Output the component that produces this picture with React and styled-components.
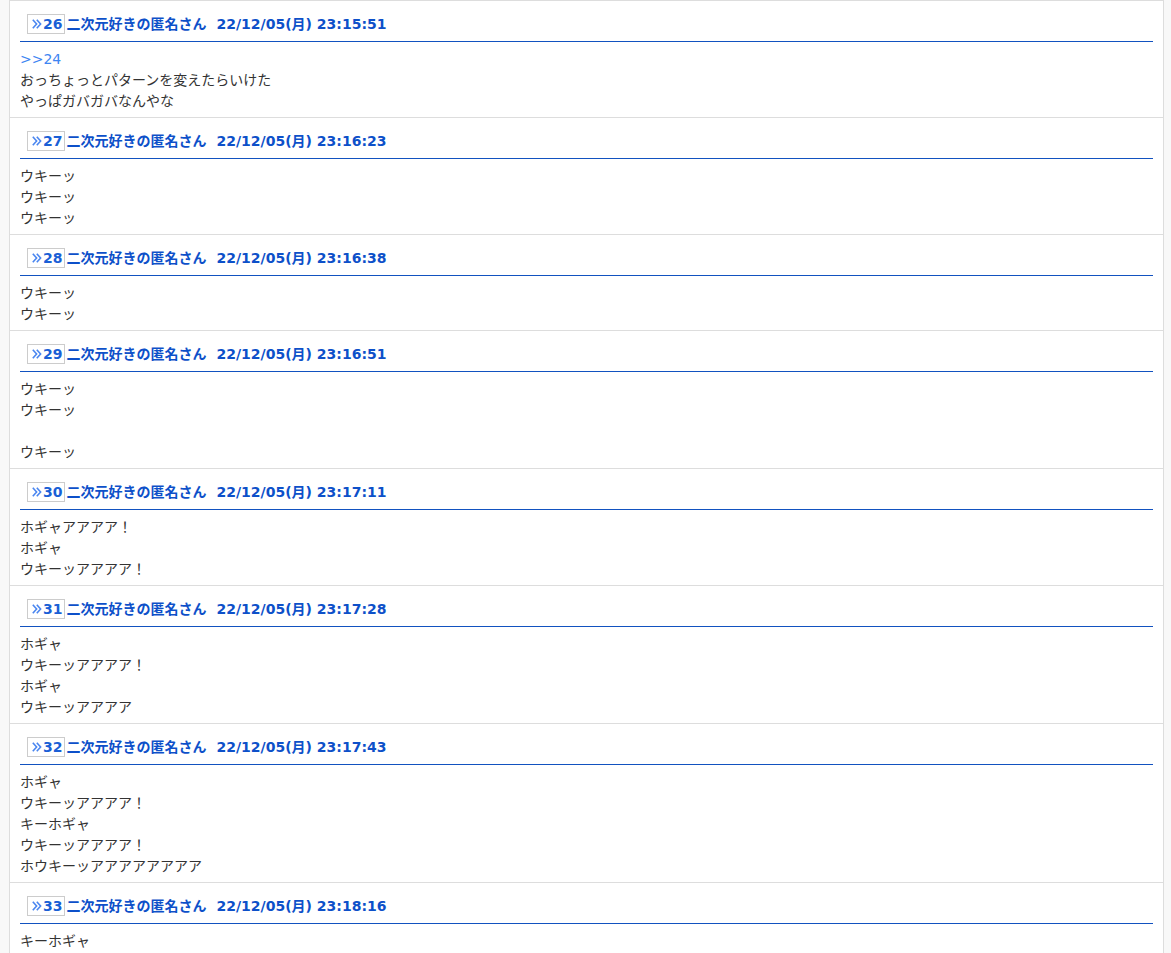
import React from 'react';
import styled, { createGlobalStyle } from 'styled-components';

// --- Estilos globales ---

const GlobalStyle = createGlobalStyle`
    body {
        margin: 0;
        background-color: #f8f8f8;
        font-family: "DejaVu Sans", "Noto Sans CJK JP", sans-serif;
    }
`;

const Thread = styled.div`
    margin-left: 9px;
    width: 1153px;
    background-color: #ffffff;
    border: 1px solid #dddddd;
    border-bottom: none;
`;

const Post = styled.div`
    padding: 0 10px;
    border-bottom: 1px solid #dddddd;
`;

const PostHeader = styled.div`
    display: flex;
    align-items: center;
    padding: 13px 0 7px 7px;
    border-bottom: 1px solid #1252c0;
    font-size: 14px;
    font-weight: bold;
    color: #0d50c9;
    line-height: 20px;
`;

const NumberBadge = styled.span`
    display: inline-flex;
    align-items: center;
    height: 18px;
    padding: 0 2px 0 4px;
    border: 1px solid #cccccc;
    background-color: #ffffff;
    color: #1a5fd6;
`;

const Chevron = styled.svg`
    width: 10px;
    height: 10px;
    margin-right: 1px;
`;

const Name = styled.span`
    margin-left: 1px;
`;

const DateText = styled.span`
    margin-left: 10px;
`;

const Body = styled.div`
    padding: 7px 0 5px 0;
    font-size: 14px;
    line-height: 21px;
    color: #333333;
`;

const Line = styled.div`
    min-height: 21px;
`;

const Anchor = styled.div`
    color: #3d85f2;
`;

const posts = [
    { no: 26, date: '22/12/05(月) 23:15:51', anchor: '>>24', lines: ['おっちょっとパターンを変えたらいけた', 'やっぱガバガバなんやな'] },
    { no: 27, date: '22/12/05(月) 23:16:23', lines: ['ウキーッ', 'ウキーッ', 'ウキーッ'] },
    { no: 28, date: '22/12/05(月) 23:16:38', lines: ['ウキーッ', 'ウキーッ'] },
    { no: 29, date: '22/12/05(月) 23:16:51', lines: ['ウキーッ', 'ウキーッ', '', 'ウキーッ'] },
    { no: 30, date: '22/12/05(月) 23:17:11', lines: ['ホギャアアアア！', 'ホギャ', 'ウキーッアアアア！'] },
    { no: 31, date: '22/12/05(月) 23:17:28', lines: ['ホギャ', 'ウキーッアアアア！', 'ホギャ', 'ウキーッアアアア'] },
    { no: 32, date: '22/12/05(月) 23:17:43', lines: ['ホギャ', 'ウキーッアアアア！', 'キーホギャ', 'ウキーッアアアア！', 'ホウキーッアアアアアアアア'] },
    { no: 33, date: '22/12/05(月) 23:18:16', lines: ['キーホギャ'] },
];

function ChevronIcon() {
    return (
        <Chevron viewBox="0 0 10 10">
            <path d="M0.8 0.8 L4.6 5 L0.8 9.2" fill="none" stroke="#4a86f0" strokeWidth="1.6" />
            <path d="M4.8 0.8 L8.6 5 L4.8 9.2" fill="none" stroke="#4a86f0" strokeWidth="1.6" />
        </Chevron>
    );
}

function App() {
    return (
        <>
            <GlobalStyle />
            <Thread>
                {posts.map((post) => (
                    <Post key={post.no}>
                        <PostHeader>
                            <NumberBadge>
                                <ChevronIcon />
                                {post.no}
                            </NumberBadge>
                            <Name>二次元好きの匿名さん</Name>
                            <DateText>{post.date}</DateText>
                        </PostHeader>
                        <Body>
                            {post.anchor && <Anchor>{post.anchor}</Anchor>}
                            {post.lines.map((line, i) => (
                                <Line key={i}>{line}</Line>
                            ))}
                        </Body>
                    </Post>
                ))}
            </Thread>
        </>
    );
}

export default App;
